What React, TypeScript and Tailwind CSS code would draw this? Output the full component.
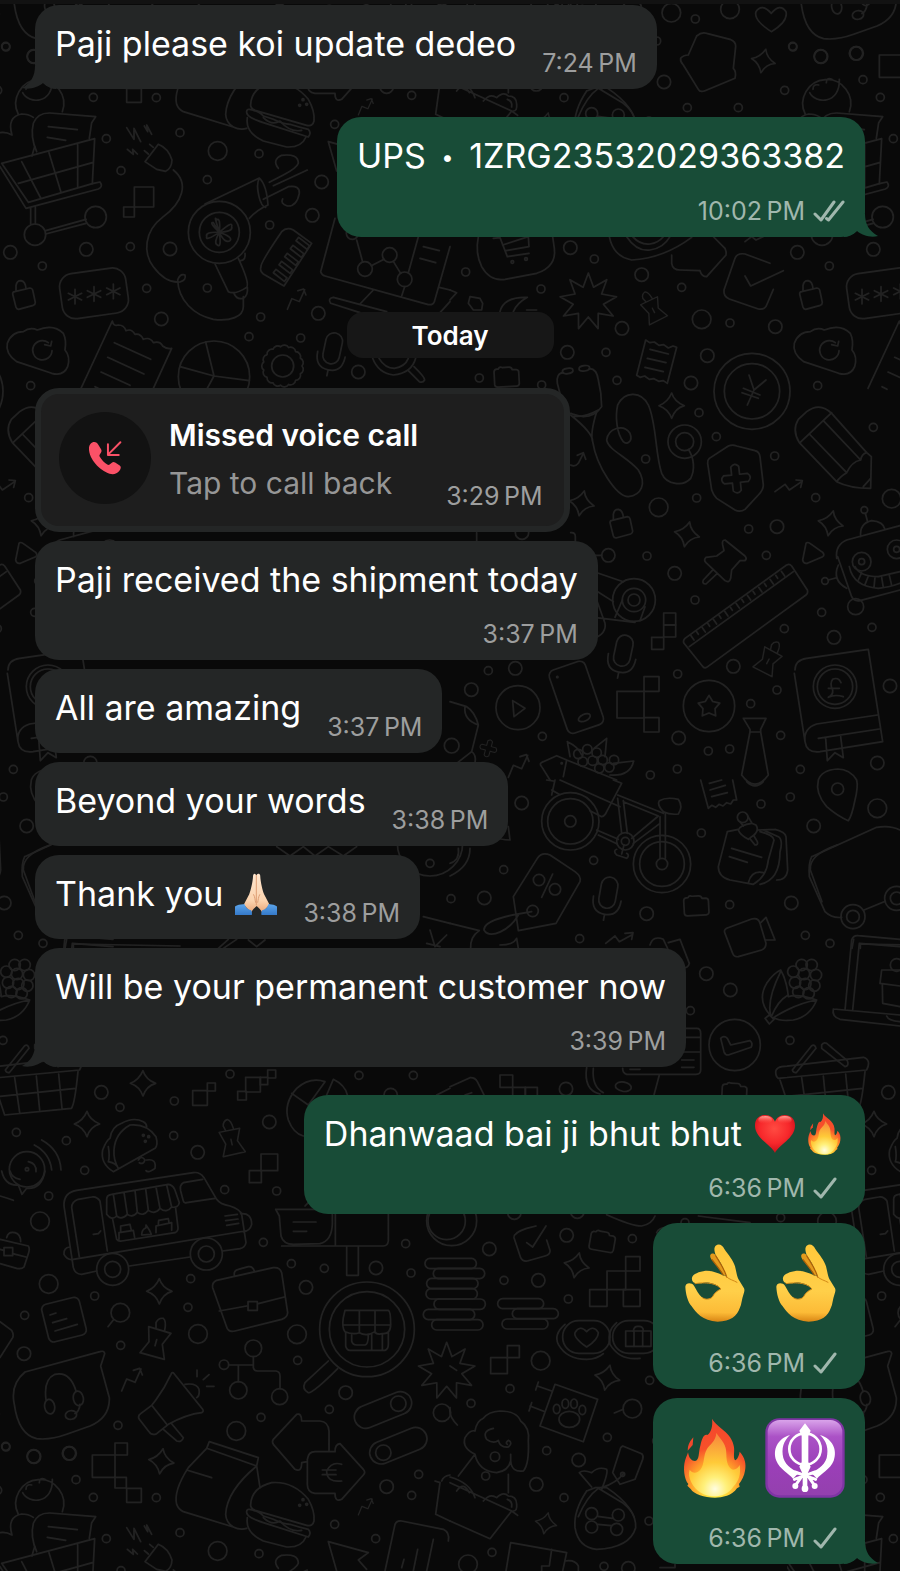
import type { ReactNode } from 'react'

type Dot = [number, number]
type Ring = [number, number, number]
type Box = [number, number, number, number]

interface Patch {
  x: number
  y: number
  small: Dot[]
  medium: Dot[]
  rings: Ring[]
  boxes: Box[]
  lines: string[]
  extra?: ReactNode
}

// little doodles which come back several times in the wallpaper
const SPARKLE = 'M0 -38Q8 -12 38 0Q10 8 0 38Q-10 10 -38 0Q-12 -10 0 -38Z'
const CLIP = 'M-22 -43L45 -23L19 10L25 55L-48 35L-21 2ZM0 -38V-55Q7 -70 22 -68Q32 -60 26 -32M2 -4L-3 14'
const TREND = 'M0 68L15 32L40 42L58 2M35 6L54 0L62 20'
const LOCK = 'M0 40Q0 34 6 33L52 22Q58 22 60 28L68 65Q68 72 62 74L18 86Q12 86 10 80ZM10 32V15Q12 0 25 0Q38 2 40 24'
const MIC = 'M-25 -22V22A25 25 0 0 0 25 22V-22A25 25 0 0 0 -25 -22ZM-42 18Q-42 66 0 66Q42 66 42 18M0 66V84'
const FOLDER = 'M-37 20V-18Q-36 -26 -28 -26H-24Q-20 -34 -12 -30H8Q16 -30 18 -22H30Q38 -20 37 -12V20Q36 28 28 28H-28Q-36 28 -37 20Z'
const CROSS = 'M-12 -36Q0 -50 12 -36V-12H36Q50 0 36 12H12V36Q0 50 -12 36V12H-36Q-50 0 -36 -12H-12Z'

function Doodle({ d, x, y, r = 0, s = 1 }: { d: string; x: number; y: number; r?: number; s?: number }) {
  return <path d={d} transform={`translate(${x} ${y}) rotate(${r}) scale(${s})`} />
}

function starPath(cx: number, cy: number, outer: number, inner: number, n: number) {
  const pts: string[] = []
  for (let i = 0; i < n * 2; i++) {
    const a = (Math.PI * i) / n - Math.PI / 2
    const r = i % 2 ? inner : outer
    pts.push(`${(cx + r * Math.cos(a)).toFixed(1)} ${(cy + r * Math.sin(a)).toFixed(1)}`)
  }
  return `M${pts.join('L')}Z`
}

function gearPath(cx: number, cy: number, r: number, n: number) {
  const at = (i: number) => {
    const a = (Math.PI * 2 * i) / n
    return `${(cx + r * Math.cos(a)).toFixed(1)} ${(cy + r * Math.sin(a)).toFixed(1)}`
  }
  let d = `M${at(0)}`
  for (let i = 1; i <= n; i++) d += `A15 15 0 0 1 ${at(i)}`
  return d
}

const patches: Patch[] = [
  {
    x: 0,
    y: 0,
    small: [[622, 539], [363, 512], [809, 675], [391, 740], [127, 798], [440, 865], [622, 864], [782, 951], [747, 1010], [902, 1014], [92, 1157]],
    medium: [[965, 546], [937, 646], [31, 757], [259, 748], [510, 747], [484, 957], [955, 940], [1075, 1116]],
    rings: [[105, 704, 32], [287, 651, 32], [658, 697, 93], [658, 697, 60], [642, 1130, 107], [848, 1098, 33], [1057, 700, 18], [1095, 807, 22], [1169, 765, 22], [1214, 838, 22]],
    boxes: [[403, 561, 58, 60], [371, 621, 32, 30]],
    lines: [
      'M5 490L85 607L277 551L284 416L5 490M65 485L122 594M147 458L183 577M233 434V560M55 550L280 487',
      'M0 500L78 625L295 567Q310 560 300 546L277 551M92 625V672M106 622V672M137 692L258 658M137 702L258 670',
      'M110 455Q90 410 100 370Q112 338 150 339L287 350L275 368L268 415M145 380L232 389M142 412L197 421',
      'M0 398Q18 395 36 405Q20 350 65 342Q85 342 100 352M104 440Q98 460 96 468',
      'M380 383L402 418V385L422 425M433 378L443 395L440 375L455 403M382 448L400 463L398 448L412 462',
      'M435 485L475 433Q505 445 516 480Q515 505 497 514L470 508ZM449 433L460 442M433 452L445 462',
      'M520 510C570 550 545 610 490 650C430 695 430 760 460 800C490 840 520 848 540 846Q560 840 555 825Q540 820 533 840C535 900 580 945 640 958C690 965 730 950 730 920V890',
      'M615 612L778 534Q800 555 804 615Q770 630 748 655M778 534C765 560 780 620 797 622',
      'M835 505Q815 480 845 466Q895 460 895 490Q890 505 850 525L808 547M820 557L922 510M790 598L865 560Q900 555 898 580Q890 620 862 618Q840 610 848 597',
      'M645 792L685 875Q705 885 740 862Q750 850 715 775M702 880Q710 900 730 895Q745 885 742 862M735 760Q738 780 722 782',
      'M658 697Q640 640 650 660Q662 650 658 697Q700 660 695 680Q700 695 658 697Q700 712 690 722Q675 732 658 697Q665 745 652 735Q640 730 658 697Q615 725 620 710Q615 695 658 697Q625 665 640 668Z',
      'M783 800Q780 790 845 695Q860 680 880 690L935 730L852 858L790 822Q778 812 783 800Z',
      'M50 1085Q15 1060 22 1030Q35 995 70 995Q90 980 112 990Q160 970 190 1000Q200 1020 195 1050Q212 1070 203 1100Q190 1130 155 1120ZM145 1028A29 29 0 1 0 156 1052M134 1034L152 1038L155 1024',
      'M243 1165L337 963Q340 980 355 975Q372 975 378 992Q395 985 405 1003Q422 1000 430 1018Q450 1010 460 1028Q480 1022 488 1038Q500 1048 515 1045L460 1165M343 1028L452 1078M323 1072L432 1122M303 1116L390 1156M285 1160L300 1168',
      'M642 1128L617 1026M642 1128L540 1100M642 1128L748 1142M642 1128L597 1210',
      gearPath(848, 1098, 58, 15),
      'M1005 655L962 815Q965 825 975 828L1285 914Q1300 915 1303 905L1350 740M1070 720L1088 786M1114 797L1152 778M1180 784L1202 820M1255 710L1225 818M1214 860L1205 888M1270 740L1318 752M1260 775L1307 788M1120 870L1080 912M1000 892Q982 895 992 910L1080 938M1000 892L1160 935M1350 905L1320 938M1318 862L1350 870',
      'M1118 1075Q1135 1120 1180 1125Q1235 1120 1247 1075M1137 1075Q1155 1105 1183 1105Q1215 1100 1225 1075M1225 1112L1258 1145Q1268 1150 1274 1140Q1275 1132 1242 1100',
      'M225 868V912M205 880L245 900M205 900L245 880M282 860V904M262 872L302 892M262 892L302 872M340 852V896M320 864L360 884M320 884L360 864',
    ],
    extra: (
      <>
        <Doodle d={LOCK} x={38} y={842} />
        <Doodle d={TREND} x={862} y={867} s={0.9} />
        <Doodle d={MIC} x={998} y={1045} r={12} s={1} />
        <rect x="182" y="812" width="200" height="136" rx="40" transform="rotate(-8 282 880)" />
        {[0, 1, 2, 3, 4].map(i => (
          <rect key={i} x={828 + i * 17} y={808 - i * 24} width="42" height="13" transform={`rotate(38 ${828 + i * 17} ${808 - i * 24})`} />
        ))}
      </>
    ),
  },
  {
    x: 450,
    y: 0,
    small: [[736, 57], [1028, 139], [1004, 271], [712, 323], [865, 323], [620, 123], [433, 777], [47, 816], [273, 867], [695, 862], [840, 969], [468, 1057], [501, 1141], [88, 1134], [275, 1155]],
    medium: [[1112, 169], [1218, 160], [642, 246], [361, 743], [575, 824], [976, 980], [516, 985], [352, 1057], [772, 1067], [723, 1149]],
    rings: [[664, 38, 28], [840, 28, 28], [755, 958, 28], [187, 786, 4], [228, 777, 4], [906, 1174, 114], [906, 1174, 83]],
    boxes: [],
    lines: [
      'M964 95Q910 60 918 35Q935 8 964 40Q990 8 1008 35Q1015 65 964 95Z',
      'M692 175Q700 165 715 165L740 108Q755 95 770 100L840 118Q858 125 857 140L850 205Q860 215 855 235L765 272Q750 278 745 268L700 195Q690 185 692 175Z',
      'M385 350Q410 290 445 265L520 310Q545 330 552 350',
      'M85 710Q75 760 95 800Q120 845 165 838L260 820Q320 800 313 745L308 710M130 715L150 713L172 770L237 760M158 735L235 710L237 740L168 752',
      'M478 710Q490 770 545 780Q640 775 725 712M530 710Q560 755 600 750Q640 745 660 710M548 710Q570 735 600 732Q625 728 640 710',
      'M665 765V790Q668 810 690 810L750 812Q755 830 770 830L828 765Q830 755 825 745L788 708M885 725L905 710L918 720L950 705',
      'M960 790L885 762Q862 758 855 775L822 870Q820 890 838 897L925 927Q945 930 950 915L970 868M885 828L902 858L1000 812',
      starPath(415, 905, 86, 46, 9),
      'M0 870L20 878L0 900M60 890L90 895L98 910L95 930L70 930L55 910ZM150 935Q160 890 232 892Q200 910 190 935M230 930H260',
      'M587 1020L599 1028L613 1026L627 1036L641 1034L655 1044L669 1038L680 1042L652 1150L640 1142L626 1144L612 1136L598 1138L584 1128L570 1132L560 1126ZM600 1048L655 1062M592 1075L648 1088M585 1102L640 1115',
      'M897 1125L912 1170L948 1140M912 1170L892 1215M880 1165L930 1185M876 1178L925 1195',
      'M340 1118Q318 1120 322 1150L335 1200M418 1106Q440 1105 445 1140Q455 1180 455 1220Q435 1250 400 1250Q370 1245 362 1240',
    ],
    extra: (
      <>
        <Doodle d={SPARKLE} x={940} y={183} r={12} s={0.95} />
        <Doodle d={CLIP} x={608} y={928} r={-42} s={0.8} />
        <Doodle d={FOLDER} x={170} y={1132} r={-3} />
        <ellipse cx="353" cy="1113" rx="16" ry="8" transform="rotate(-8 353 1113)" />
        <ellipse cx="403" cy="1105" rx="16" ry="8" transform="rotate(-8 403 1105)" />
      </>
    ),
  },
  {
    x: 450,
    y: 380,
    small: [[747, 98], [799, 170], [587, 237], [740, 354], [974, 228], [1270, 142], [1097, 353], [896, 447], [949, 526], [591, 528], [735, 660], [1003, 746], [1115, 697], [1266, 742], [683, 882], [902, 971], [981, 930], [115, 872], [277, 1069], [775, 1113], [839, 1107], [992, 1066], [682, 1167], [601, 1185], [1051, 1168]],
    medium: [[981, 440], [674, 580], [475, 526], [196, 865], [64, 929], [850, 859], [1152, 772], [1320, 918], [686, 1074], [1282, 1149], [216, 458]],
    rings: [[626, 382, 28], [1325, 356, 28], [1217, 680, 24], [704, 185, 50], [704, 185, 27], [1243, 390, 10], [1125, 603, 10], [1235, 545, 28], [1235, 545, 9], [1340, 508, 28], [1340, 508, 9], [552, 660, 64], [552, 660, 35], [552, 660, 18], [204, 983, 66], [777, 978, 77], [1155, 920, 65], [1155, 920, 53], [5, 1097, 22], [385, 1122, 14], [412, 1108, 14], [440, 1118, 14], [398, 1145, 14], [428, 1142, 14], [458, 1140, 14], [448, 1165, 14], [478, 1162, 14], [492, 1140, 14], [322, 891, 2], [335, 1150, 2]],
    boxes: [[641, 699, 36, 36], [641, 735, 36, 36], [605, 772, 36, 36], [582, 890, 45, 44], [501, 934, 81, 80], [582, 1013, 45, 43]],
    lines: [
      'M365 108Q400 115 445 90M362 105Q430 160 428 185M440 95Q420 160 428 185C440 260 500 350 535 350C575 345 590 310 565 270C530 230 475 210 470 180C475 145 520 130 540 160C550 185 530 195 520 185C500 160 495 110 503 75C525 30 575 35 595 75C620 130 615 220 635 280C650 315 700 320 722 295C735 270 733 235 715 208',
      'M778 235L835 198Q848 193 860 198L915 212Q928 215 930 230L940 315Q940 330 925 345L885 388Q870 398 855 390L800 355Q790 345 785 330L773 250Q772 240 778 235Z',
      'M1048 188Q1025 150 1045 118L1070 95Q1110 65 1145 100L1250 218M1048 188L1160 305M1050 188L1145 98M1078 162L1190 278M1120 122L1232 240M1160 305Q1200 325 1262 325L1264 230L1250 218Q1235 222 1232 240Q1205 245 1190 278Q1170 290 1160 305M1262 295L1240 320',
      'M975 335L1005 313L1018 330L1055 305M1038 300L1057 302L1052 322M362 255Q375 262 385 250L400 220M382 226L400 218L407 238',
      'M1160 535Q1155 495 1190 480L1350 437M1163 530L1205 650Q1212 665 1230 662L1350 630M1232 470Q1228 430 1265 422Q1300 425 1305 448M1252 422L1246 400M1165 555Q1145 600 1190 625M1135 600L1157 594',
      'M1198 560Q1210 620 1285 625Q1320 622 1350 610M1215 560Q1230 590 1285 590L1350 575M1225 600L1235 578M1245 614L1255 588M1272 622L1275 592M1300 622L1295 592M1325 616L1318 586',
      'M825 480Q815 480 818 495L822 512L800 528L768 532Q760 540 768 548L825 602Q838 610 842 595L845 570L870 542L885 542Q892 535 885 528ZM790 568L760 600Q755 612 768 612L802 580',
      'M1068 490L1058 540Q1060 552 1072 550L1118 530Q1125 525 1118 517L1080 490Q1072 485 1068 490Z',
      'M705 775L1010 555Q1018 550 1025 558L1072 630Q1075 640 1068 645L770 862Q762 866 757 858L702 790Q698 782 705 775ZM718 800L1030 575',
      'M432 575L520 605M435 630L490 665M432 712L555 727M440 660L465 730Q470 760 432 775M517 660L495 712M585 680L570 722M425 526H455M362 458H365Q376 458 376 470V488M80 458V488',
      'M188 962L225 985L192 1010Z',
      starPath(777, 980, 34, 19, 5),
      'M880 1015H948L932 1048V1056H900V1048ZM900 1056L875 1185Q915 1240 955 1185L932 1056',
      'M1035 870Q1035 840 1070 835L1255 808L1298 1085L1110 1115Q1070 1120 1065 1085L1033 880M1065 1085Q1060 1045 1100 1032L1283 1005M1105 1075L1288 1047M1127 1075L1132 1142L1155 1118L1180 1133L1172 1070',
      'M1173 908Q1165 890 1148 898Q1138 912 1148 930Q1150 945 1135 952Q1155 942 1180 950M1135 925H1168',
      'M0 965L50 980Q75 995 85 1035L65 1115M45 980Q40 1020 85 1035M20 1150L65 1115Q80 1125 75 1150',
      'M352 1085L360 1130M352 1085Q385 1100 395 1125M470 1075L432 1105M470 1075L465 1130M551 1143L490 1150M551 1143Q540 1190 480 1185M275 1160Q265 1150 280 1145L320 1127L350 1140L500 1200M350 1140L340 1190M275 1160L300 1200',
    ],
    extra: (
      <>
        <Doodle d={SPARKLE} x={665} y={77} />
        <Doodle d={SPARKLE} x={711} y={463} r={12} />
        <Doodle d={SPARKLE} x={1142} y={430} r={12} />
        <Doodle d={SPARKLE} x={395} y={370} r={12} />
        <Doodle d={CROSS} x={858} y={296} r={-6} />
        <Doodle d={CROSS} x={115} y={1105} r={15} s={0.6} />
        <Doodle d={LOCK} x={480} y={388} />
        <Doodle d={MIC} x={520} y={812} r={12} />
        <Doodle d={CLIP} x={955} y={840} r={12} s={0.85} />
        <Doodle d={TREND} x={175} y={1124} />
        <rect x="322" y="852" width="114" height="200" rx="18" transform="rotate(-19 379 952)" />
        <ellipse cx="403" cy="1013" rx="19" ry="10" transform="rotate(-25 403 1013)" />
        {Array.from({ length: 17 }, (_, i) => (
          <path key={i} d={`M${722 + i * 17} ${766 - i * 12}l${i % 2 ? 6 : 10} ${i % 2 ? 9 : 14}`} />
        ))}
      </>
    ),
  },
  {
    x: 0,
    y: 780,
    small: [[690, 882], [523, 963], [360, 982], [49, 1057], [199, 1082], [521, 1067], [254, 1171], [1077, 886], [1240, 886], [1290, 250]],
    medium: [[304, 937], [808, 1026], [593, 1117], [1172, 945]],
    rings: [[81, 1168, 53], [81, 1168, 5], [430, 1066, 3], [446, 1070, 3], [436, 1084, 3], [1290, 190, 98]],
    boxes: [[578, 932, 44, 44], [622, 909, 24, 24], [737, 892, 44, 44], [781, 892, 22, 22], [803, 870, 24, 24], [713, 934, 26, 26], [783, 1122, 50, 50], [748, 1172, 36, 36]],
    lines: [
      'M975 905Q930 890 890 925Q850 970 865 1020Q880 1060 910 1068M875 940L925 975L975 905M980 945L1000 898Q1035 915 1042 945M1310 945L1350 925',
      'M340 1175L465 1105Q475 1095 468 1070Q440 1030 390 1035Q345 1060 342 1110Q340 1140 355 1165M340 1175Q300 1150 308 1110Q320 1080 330 1075Q335 1040 365 1030Q400 1010 430 1025Q440 1030 440 1040M415 1140Q425 1125 435 1140Q430 1155 418 1148M440 1140Q470 1135 465 1165Q445 1180 438 1172M325 1100Q330 1130 325 1145Q350 1150 355 1165',
      'M103 1095Q150 1120 155 1170M125 1080Q180 1110 183 1170M85 1145Q110 1150 108 1175',
      'M70 270Q65 225 150 195M70 270L105 365M195 505L200 478M220 505V492L540 498M655 505L685 478M670 505L710 478M745 480L770 500L795 480M830 200L870 228L910 200L945 228L985 200L1030 228L1070 200M1270 410L1350 430M1290 450L1305 500L1340 465M1280 490L1320 500',
    ],
    extra: (
      <>
        <Doodle d={SPARKLE} x={429} y={910} />
        <Doodle d={SPARKLE} x={261} y={1032} />
        <Doodle d={CLIP} x={693} y={1082} r={-28} s={0.9} />
      </>
    ),
  },
  {
    x: 450,
    y: 780,
    small: [[754, 159], [933, 72], [1021, 51], [431, 241], [161, 269], [3, 356], [389, 476], [839, 374], [1066, 466], [1140, 490], [721, 692], [1020, 781]],
    medium: [[215, 69], [1091, 138], [103, 354], [590, 401], [1024, 369], [769, 581], [841, 630], [348, 927]],
    rings: [[1282, 85, 28], [361, 124, 86], [361, 124, 68], [361, 124, 17], [636, 252, 86], [636, 252, 67], [636, 252, 17], [526, 184, 26], [526, 184, 12], [267, 300, 17], [315, 328, 17], [248, 393, 17], [1209, 410, 36], [1209, 410, 19], [1340, 355, 36], [1340, 355, 19], [1163, 27, 18], [1340, 555, 19], [854, 795, 77], [1055, 555, 17], [1085, 555, 17], [1030, 575, 17], [1062, 582, 17], [1098, 585, 17], [1035, 608, 17], [1066, 612, 17], [1093, 617, 17], [1045, 636, 17], [1076, 640, 17], [878, 112, 16]],
    boxes: [[150, 885, 38, 37], [188, 922, 38, 37], [226, 922, 36, 37]],
    lines: [
      'M440 150L505 178M445 165L502 192M503 55L515 160M520 62L532 160M503 45L640 100M520 65L625 108L545 175M630 130L550 190M630 110V235M646 100V235M640 95Q620 75 628 62Q650 50 685 58Q700 80 685 102Q660 105 640 95',
      'M522 195L515 222M500 208Q488 212 500 225L530 235Q540 225 530 220M315 0L305 45M330 0L510 80M305 30L330 44M420 92L455 110Q465 108 470 95L515 10L490 0M290 0L310 3',
      'M752 0L775 85L785 76L797 82L807 73L819 78L830 68L842 72L850 60L860 60L848 0M780 30L826 16M785 50L832 38M778 10L815 0M890 5Q915 30 940 5',
      'M832 155L805 260Q805 290 840 300L910 313Q950 290 955 240L972 180Q970 165 930 155M940 150L985 170Q1000 180 990 215Q990 300 930 313M975 148Q1005 155 1008 170L1013 270Q1010 300 980 300M845 205L935 232M838 230L892 247M895 308Q905 270 940 278M832 155L865 148M865 150Q870 165 895 178L905 170Q930 155 918 135L905 130Q870 135 865 150M870 125L880 138M893 108L905 128M900 176L915 195Q925 195 922 185L912 168M925 150L975 148',
      'M205 452L190 350L262 235Q275 215 300 225L375 275Q395 290 390 305L318 430ZM308 282L275 352M245 395C180 405 100 420 102 450C120 480 180 450 205 405',
      'M825 460Q820 450 830 445L905 417Q925 412 930 430L948 490Q948 505 935 510L865 530Q852 532 848 520ZM930 430L948 412L975 480L945 480',
      'M467 490L495 468L508 485L545 465M525 460L549 458L545 478',
      'M600 495Q610 465 640 478L655 510M655 488L690 478L718 550Q715 565 695 565',
      'M1085 230Q1075 250 1078 290L1125 395Q1145 415 1175 412M1085 230L1280 142Q1320 135 1350 150M1242 390L1306 364',
      'M1105 0Q1095 40 1130 80Q1165 110 1195 122Q1205 110 1215 60Q1225 20 1220 0Q1200 -33 1163 -33Q1115 -30 1105 0',
      'M960 705Q920 660 950 610Q970 580 992 570Q1010 600 1015 650Q1040 640 1100 660Q1080 710 1030 720Q990 725 970 712M992 575Q950 660 962 705M1015 645Q985 660 965 708M1100 660Q1040 670 975 710M945 715L958 705L972 718L958 732Z',
      'M1185 690L1205 480Q1210 465 1225 467L1350 478M1208 690L1228 490L1350 500M1150 687Q1145 710 1170 718L1350 738M1150 687L1350 705M1350 570H1295L1290 610L1350 618M1297 615L1298 670L1350 680M1310 708Q1315 722 1350 725',
      'M812 775Q822 765 832 775L842 795L900 782Q910 790 903 802L835 825Q825 825 822 815Z',
      'M980 890Q970 865 995 860L1240 832Q1265 840 1250 870L985 895ZM990 900L1025 1005L1225 985Q1235 975 1245 875M1055 893L1070 998M1120 888L1130 990M1187 882L1197 985M1003 950L1238 925',
      'M1085 797Q1095 792 1098 805L1040 877Q1030 880 1027 870ZM1115 795Q1120 785 1130 790L1192 842Q1198 858 1185 860L1115 805Z',
      'M698 745H740Q752 745 752 760V870Q752 883 738 883H530Q518 880 518 865M698 772H750M698 816H750M695 840H732M695 862H732M410 862Q400 930 450 942M430 865Q425 920 460 938M628 885L612 945M540 868H570',
      'M0 430L88 452Q60 470 62 505M150 495Q190 495 200 475L205 505M0 920L60 893Q75 892 82 905L102 945M45 945L65 938',
      'M135 170Q150 180 180 180L175 140M60 205Q60 260 0 288M25 205Q30 240 0 250',
    ],
    extra: (
      <>
        <Doodle d={MIC} x={475} y={338} r={10} />
        <Doodle d={FOLDER} x={739} y={378} r={-3} />
        <Doodle d={FOLDER} x={853} y={940} r={3} />
        <ellipse cx="520" cy="920" rx="24" ry="14" transform="rotate(10 520 920)" />
      </>
    ),
  },
  {
    x: 0,
    y: 1171,
    small: [[146, 75], [674, 56], [830, 60], [790, 214], [874, 278], [973, 292], [1233, 306], [1217, 218], [284, 375], [572, 323], [564, 409], [74, 433], [362, 523], [893, 568], [988, 715], [354, 763], [783, 739], [18, 828], [228, 926], [280, 979], [469, 980], [540, 1085], [319, 1103], [777, 1148], [1004, 1060], [1127, 1103], [1256, 910], [1235, 973]],
    medium: [[1128, 291], [918, 349], [72, 548], [1037, 665], [102, 857], [209, 847], [1160, 947]],
    rings: [[120, 151, 28], [146, 339, 28], [594, 489, 28], [891, 490, 28], [709, 780, 28], [653, 1140, 28], [361, 425, 28], [1326, 725, 26], [338, 295, 48], [338, 295, 24], [619, 249, 48], [619, 249, 24], [760, 532, 25], [672, 581, 14], [715, 658, 26], [839, 677, 24], [1101, 475, 142], [1101, 475, 113], [1195, 698, 23], [1150, 845, 23], [909, 986, 3], [899, 1003, 3], [920, 1000, 3]],
    boxes: [[12, 230, 26, 24], [744, 392, 28, 26], [345, 816, 37, 36], [277, 852, 68, 67], [345, 919, 34, 32], [380, 952, 44, 42]],
    lines: [
      'M290 300L245 310Q225 310 220 290L192 105Q190 65 230 58L580 5Q600 2 612 20L650 85Q660 100 690 105Q720 115 725 130L738 215Q735 230 720 233L668 240M570 258L388 285M220 265L735 180',
      'M322 240L300 90Q290 75 275 78L235 85Q215 92 215 110L238 258M608 25L550 35Q538 42 542 60L550 90Q552 97 560 95L645 82M280 190L295 188L302 180M675 135L712 130M677 149L714 144M680 163L716 157M722 128Q755 125 755 160Q750 180 730 182M210 228Q190 230 192 250Q200 265 215 266',
      'M320 85Q320 72 335 70L505 40Q518 42 524 55L538 95Q535 112 515 108Q500 128 480 112Q465 132 445 118Q430 138 412 124Q398 142 382 130Q365 148 350 135Q335 150 320 130ZM340 70L350 135M372 64L382 130M405 58L412 124M437 53L445 118M468 48L480 112M500 42L515 108',
      'M338 145L350 205Q355 212 365 210L525 185Q535 180 534 170L527 112M357 205V185L400 178L404 200M362 182V165L390 160L394 178M425 192Q425 175 438 170V162Q450 178 454 190ZM468 185V165L515 155V178M475 160L476 148L505 143L507 155',
      'M0 205L85 225Q90 232 86 245L72 288Q65 295 50 292L0 278M20 200Q25 180 45 185Q62 190 62 212M0 235L12 238M38 248L78 258M0 452L35 478Q42 490 38 500L0 560',
      'M5 0Q15 45 55 42L66 70L80 52Q125 55 135 0M30 0Q35 20 60 25M0 75Q20 80 40 88',
      'M150 432L168 426M158 455L200 443M165 480L232 460M340 447L324 467',
      'M75 603Q30 640 43 700Q55 790 110 803Q150 808 200 790L270 765Q330 740 328 680L302 585L314 548Q313 538 300 542ZM138 685Q130 625 165 610Q210 600 228 660M240 700Q238 720 225 728',
      'M520 605L608 715Q612 722 605 725Q560 730 505 760L470 788Q455 795 447 782L418 745Q412 735 422 728L455 703Q490 660 513 610Q516 603 520 605ZM455 703L502 762M490 775L530 810Q545 815 550 800L515 758M555 640Q590 635 597 655Q600 675 590 680M591 597V617M610 626L627 611M620 646H642',
      'M650 328L820 290Q840 288 845 305L863 425Q862 440 845 445L705 480Q685 485 680 468L638 350Q635 335 650 328ZM658 420L740 405M775 398L853 378M703 315Q700 298 715 295L745 287Q758 285 763 300',
      'M686 582H758M760 557V590Q762 600 772 600H828Q840 602 840 615V653M715 583V632',
      'M985 570L915 635Q905 655 925 665Q938 668 1013 593',
      'M1035 418H1165Q1172 420 1172 460Q1172 490 1148 488Q1128 492 1125 482Q1100 498 1078 485Q1060 492 1035 482Q1025 470 1030 440ZM1030 462H1172M1078 418V485M1125 418V485M1037 485V525Q1040 538 1050 538H1155Q1165 535 1165 520V485M1115 490V538M1147 490V538M1055 492V510Q1058 522 1070 522H1095Q1105 520 1105 492',
      'M905 750Q905 725 890 730L820 805Q815 812 820 820L885 895Q905 905 905 875L922 872M905 750H960Q985 752 987 780V838M945 842H1005Q1005 820 1020 818L1090 895Q1098 905 1090 912L1025 985Q1005 995 1005 967H945Q922 965 922 940V865Q925 842 945 842ZM1025 880Q995 870 980 900Q980 935 1025 930M967 897H1008M967 911H1008',
      'M620 832L628 812L775 860L770 885L620 832L565 890Q520 960 530 1000Q535 1015 550 1022L700 1068Q720 1078 740 1072M770 885L780 950M770 885Q680 960 677 1030Q678 1055 700 1068M560 897L635 920',
      'M752 1000Q755 950 815 935Q880 930 925 985Q945 1020 942 1050Q938 1068 920 1063L765 1018Q750 1010 752 1000ZM740 1025Q738 1010 760 1018Q780 1022 790 1035L820 1045Q850 1060 870 1060Q900 1070 925 1075Q935 1085 925 1098L790 1055Q742 1040 740 1025ZM742 1040Q735 1085 790 1110L860 1128Q905 1130 918 1098',
      'M790 1040Q815 1065 840 1050Q870 1085 905 1078',
      'M1155 1200L1185 1060Q1190 1048 1205 1050L1330 1075Q1350 1085 1345 1110M1212 1165L1205 1190M1253 1135L1240 1200M1300 1105L1280 1200M985 1112L1105 1145L1075 1167L1100 1195M985 1112L1010 1200M1305 930L1320 935L1307 1030L1350 1050M1325 930Q1330 915 1350 912',
      'M827 115H1165V210Q1163 225 1150 225H845M827 115L838 135L843 195Q850 220 880 220L960 218Q995 210 997 160V130M1006 130V225M880 153H948M880 181H920M1040 225V313H1075V225M915 105L925 95',
      'M55 1030A72 72 0 1 1 187 1022M68 965C85 1000 160 1000 157 925M78 955Q78 938 95 942M118 935Q118 918 135 925',
    ],
    extra: (
      <>
        <Doodle d={SPARKLE} x={478} y={361} />
        <Doodle d={SPARKLE} x={484} y={871} r={8} />
        <Doodle d={CLIP} x={468} y={510} />
        <Doodle d={TREND} x={365} y={592} />
        <Doodle d={TREND} x={1075} y={983} s={0.72} />
        <rect x="134" y="388" width="116" height="116" rx="16" transform="rotate(-14 192 446)" />
        <rect x="1059" y="683" width="180" height="68" rx="34" transform="rotate(-22 1149 717)" />
        <rect x="1105" y="790" width="180" height="68" rx="34" transform="rotate(-22 1195 824)" />
        <ellipse cx="149" cy="707" rx="15" ry="22" transform="rotate(-10 149 707)" />
        <ellipse cx="235" cy="682" rx="15" ry="22" transform="rotate(-10 235 682)" />
        <ellipse cx="213" cy="732" rx="17" ry="13" transform="rotate(-10 213 732)" />
      </>
    ),
  },
  {
    x: 450,
    y: 1171,
    small: [[162, 328], [355, 384], [547, 203], [180, 653], [63, 697], [599, 628], [472, 799], [290, 839], [342, 980], [107, 915], [126, 1144], [462, 1186], [597, 1050], [705, 155], [992, 140]],
    medium: [[118, 234], [350, 193], [265, 328], [386, 867], [259, 940], [193, 125], [535, 1192], [382, 122]],
    rings: [[272, 569, 28], [547, 713, 28], [54, 1180, 28], [5, 149, 75], [-10, 150, 56], [135, 857, 14], [425, 1028, 18], [425, 1068, 18], [500, 1075, 18], [505, 1032, 18], [518, 910, 6]],
    boxes: [[527, 257, 43, 43], [471, 300, 56, 56], [419, 356, 52, 50], [520, 356, 50, 50], [122, 560, 50, 48], [172, 524, 36, 36], [527, 480, 76, 46]],
    lines: [
      'M230 172Q190 185 192 200L212 260Q218 272 232 270L285 255Q302 250 300 238L290 207M230 215L248 228L288 165M230 172L258 165',
      'M345 460Q310 490 325 520Q350 565 410 565Q440 565 460 548M500 455Q470 480 480 520Q510 570 570 562M410 528Q370 500 375 485Q390 460 410 482Q430 460 445 485Q445 505 410 528Z',
      'M552 480V526M578 480V526M550 480Q552 465 565 466Q580 465 580 480',
      starPath(-10, 600, 86, 46, 9),
      'M75 850Q35 830 45 800Q60 775 75 780Q80 750 100 742Q115 722 150 720Q200 720 212 750Q240 770 235 810Q238 880 220 900Q185 905 182 870V850M75 850Q85 900 140 905Q175 900 182 870M75 850L25 915M175 910V965M130 772Q95 780 110 805Q130 820 145 808Q150 830 175 828Q190 815 175 808Q165 815 172 820',
      'M315 640L443 685L400 812L270 765ZM305 660L262 645M265 633L257 657M285 722L240 705M245 695L237 720M520 715L493 726',
      'M518 825L575 848Q582 855 578 865L555 925L510 940L488 905L512 830ZM455 950Q500 935 520 908',
      'M410 960Q370 1020 375 1070Q385 1130 440 1135Q540 1130 557 1070Q560 1010 470 950M410 960L435 950L470 950M425 948L388 905Q400 895 425 905Q445 885 470 895Q475 905 455 955M443 1036L487 1042M443 1060L484 1064',
      'M0 935L185 1020L120 1103L0 1050M185 1020L203 1033M0 918Q60 935 75 980M100 990Q120 965 140 980Q160 960 175 975Q200 975 200 1000Q202 1020 190 1020M172 985Q188 990 185 1008M20 960Q40 930 58 965',
      'M168 1200L182 1115L350 1145L338 1200M305 1135L298 1185H275V1200M345 1170Q375 1165 385 1185V1200M630 1190H675V1180',
      'M470 131Q545 165 575 165Q605 160 615 135M745 135L900 155M620 185Q625 170 650 170M0 710Q-5 735 22 762M0 585L20 598',
    ],
    extra: (
      <>
        <Doodle d={SPARKLE} x={380} y={283} r={12} />
        <Doodle d={SPARKLE} x={472} y={620} r={12} />
        <Doodle d={SPARKLE} x={288} y={1057} r={12} s={0.85} />
        <Doodle d={FOLDER} x={457} y={212} r={10} />
        {[[-75, 262], [-50, 292], [-70, 322], [-72, 353], [-48, 384], [-80, 415], [-55, 446]].map(([x, y]) => (
          <rect key={y} x={x} y={y} width="154" height="31" rx="15" />
        ))}
        {[[143, 383], [187, 413], [156, 444]].map(([x, y]) => (
          <rect key={y} x={x} y={y} width="138" height="30" rx="15" />
        ))}
        <rect x="338" y="449" width="142" height="98" rx="48" />
        <rect x="488" y="449" width="142" height="98" rx="48" />
        <ellipse cx="358" cy="745" rx="31" ry="24" />
        {[[320, 714], [346, 698], [372, 698], [397, 717]].map(([x, y]) => (
          <ellipse key={x} cx={x} cy={y} rx="10" ry="14" />
        ))}
      </>
    ),
  },
]

function Wallpaper() {
  return (
    <svg className="absolute inset-0 w-full h-full" aria-hidden="true">
      <defs>
        <g id="doodles" fill="none" stroke="#222222" strokeWidth="5" strokeLinecap="round" strokeLinejoin="round">
          {patches.map(p => (
            <g key={`${p.x}-${p.y}`} transform={`translate(${p.x} ${p.y}) scale(0.33333)`}>
              {p.small.map(([x, y]) => <circle key={`${x}-${y}`} cx={x} cy={y} r="12" />)}
              {p.medium.map(([x, y]) => <circle key={`${x}-${y}`} cx={x} cy={y} r="20" />)}
              {p.rings.map(([x, y, r]) => <circle key={`${x}-${y}-${r}`} cx={x} cy={y} r={r} />)}
              {p.boxes.map(([x, y, w, h]) => <rect key={`${x}-${y}`} x={x} y={y} width={w} height={h} />)}
              {p.lines.map(d => <path key={d} d={d} />)}
              {p.extra}
            </g>
          ))}
        </g>
        <pattern id="wallpaper" width="787" height="1400" patternUnits="userSpaceOnUse">
          <use href="#doodles" />
          <use href="#doodles" x="-787" />
          <use href="#doodles" y="-1400" />
          <use href="#doodles" x="-787" y="-1400" />
        </pattern>
      </defs>
      <rect width="100%" height="100%" fill="url(#wallpaper)" />
    </svg>
  )
}

function Tail({ side }: { side: 'in' | 'out' }) {
  return (
    <svg
      viewBox="0 0 34 23"
      className={side === 'in' ? 'absolute bottom-0 -left-[13px] w-[34px] h-[23px] text-[#242626]' : 'absolute bottom-0 -right-[13px] w-[34px] h-[23px] -scale-x-100 text-[#184c37]'}
      aria-hidden="true"
    >
      <path fill="currentColor" d="M13 0C13 10 9 17 0 22C8 24 16 21 21 17C25 21 30 23 34 23V0Z" />
    </svg>
  )
}

function Check() {
  return (
    <svg viewBox="0 0 24 22" className="w-6 h-[22px] mr-2" role="img" aria-label="Sent" fill="none" stroke="currentColor" strokeLinecap="round" strokeLinejoin="round">
      <path d="M2 14L8 20L22 2" strokeWidth="3" />
    </svg>
  )
}

function DoubleCheck() {
  return (
    <svg viewBox="0 0 32 22" className="w-8 h-[22px]" role="img" aria-label="Delivered" fill="none" stroke="currentColor" strokeWidth="3" strokeLinecap="round" strokeLinejoin="round">
      <path d="M2 14L8 20L21 2M13.5 18.5L15.5 20L30 2" />
    </svg>
  )
}

function Fire({ className }: { className: string }) {
  return (
    <svg viewBox="105 597 240 240" className={className} role="img" aria-label="Fire">
      <defs>
        <radialGradient id="flame" gradientUnits="userSpaceOnUse" cx="228" cy="800" r="185">
          <stop offset="0" stopColor="#fffbd0" />
          <stop offset="0.18" stopColor="#ffe93f" />
          <stop offset="0.38" stopColor="#ffa32b" />
          <stop offset="0.62" stopColor="#f7512a" />
          <stop offset="1" stopColor="#f4482c" />
        </radialGradient>
        <radialGradient id="core" gradientUnits="userSpaceOnUse" cx="228" cy="810" r="160">
          <stop offset="0" stopColor="#fffde2" />
          <stop offset="0.22" stopColor="#fff07a" />
          <stop offset="0.5" stopColor="#ffca38" />
          <stop offset="1" stopColor="#f78a3c" />
        </radialGradient>
      </defs>
      <path fill="url(#flame)" d="M219 599C232 625 280 640 285 685C287 700 282 715 288 724C295 722 300 710 302 698C318 715 322 735 318 755C316 770 308 785 300 795L302 803L294 808C280 830 250 836 228 836C195 836 165 826 155 810L145 800L148 795C135 780 132 745 138 725C142 712 146 706 147 700C150 718 158 726 168 726C182 724 178 700 184 680C190 655 195 645 205 648C216 640 222 622 219 599Z" />
      <path fill="url(#core)" d="M232 642C250 668 262 675 262 705C262 730 268 748 282 752C292 752 298 745 302 738C306 765 300 785 284 802C268 826 246 832 228 832C198 832 170 818 156 788C150 775 148 762 152 752C160 764 174 764 184 752C198 735 192 708 204 690C212 676 230 668 232 642Z" />
      <path fill="#f4482c" d="M163 655L161 678L146 695Q145 675 163 655Z" />
    </svg>
  )
}

function Heart() {
  return (
    <svg viewBox="0 0 128 128" className="size-[42px]" role="img" aria-label="Red heart">
      <defs>
        <radialGradient id="heart" gradientUnits="userSpaceOnUse" cx="62" cy="48" r="74">
          <stop offset="0" stopColor="#ff4b42" />
          <stop offset="0.6" stopColor="#f7282b" />
          <stop offset="1" stopColor="#c90f1b" />
        </radialGradient>
        <linearGradient id="gloss" x1="0" y1="0" x2="0" y2="1">
          <stop offset="0" stopColor="#ffb3a8" stopOpacity="0.9" />
          <stop offset="1" stopColor="#ff4b42" stopOpacity="0" />
        </linearGradient>
      </defs>
      <path fill="url(#heart)" d="M64 122C54 98 3 78 3 38C3 16 18 6 34 6C49 6 60 15 64 27C68 15 79 6 94 6C110 6 125 16 125 38C125 78 74 98 64 122Z" />
      <ellipse cx="34" cy="21" rx="21" ry="12" fill="url(#gloss)" />
      <ellipse cx="94" cy="21" rx="21" ry="12" fill="url(#gloss)" />
    </svg>
  )
}

function FoldedHands() {
  return (
    <svg viewBox="0 0 130 130" className="size-[42px]" role="img" aria-label="Folded hands">
      <defs>
        <linearGradient id="sleeve" x1="0" y1="0" x2="0" y2="1">
          <stop offset="0" stopColor="#5ba4ea" />
          <stop offset="1" stopColor="#3579c9" />
        </linearGradient>
        <linearGradient id="palm" x1="0" y1="0" x2="0" y2="1">
          <stop offset="0" stopColor="#ffe6ce" />
          <stop offset="0.7" stopColor="#fbd3ae" />
          <stop offset="1" stopColor="#e9a678" />
        </linearGradient>
      </defs>
      <path fill="url(#palm)" d="M65 6C62 0 57 2 56 8C55 30 48 56 44 66L27 98L50 122C54 112 64 106 67 102C70 106 80 112 84 122L107 98L90 66C86 56 79 30 78 8C77 1 70 0 67 6Z" />
      <path fill="none" stroke="#dd9c73" strokeWidth="3" d="M66 6V100M57 66C62 74 62 84 64 92M77 66C72 74 72 84 70 92" />
      <path fill="url(#sleeve)" d="M0 104C8 98 20 96 30 97C32 108 40 114 50 115C53 120 53 126 52 130H0ZM130 104C122 98 112 96 103 97C101 108 94 114 84 115C81 120 81 126 82 130H130Z" />
    </svg>
  )
}

function OkHand() {
  return (
    <svg viewBox="105 72 240 240" className="size-20" role="img" aria-label="OK hand">
      <defs>
        <linearGradient id="skin" gradientUnits="userSpaceOnUse" x1="230" y1="76" x2="225" y2="308">
          <stop offset="0" stopColor="#ffc83a" />
          <stop offset="0.6" stopColor="#ffcf49" />
          <stop offset="0.88" stopColor="#fcbb37" />
          <stop offset="1" stopColor="#d98514" />
        </linearGradient>
      </defs>
      <path fill="#e39a1d" d="M256 172C248 155 232 142 226 132C216 122 212 114 214 108C218 101 226 103 230 108L262 160Z" />
      <path fill="url(#skin)" d="M139 203C140 190 158 190 165 200C172 212 178 226 190 236C200 243 214 240 220 234C226 222 236 214 246 210C240 202 232 196 218 193C205 188 195 193 180 193C165 195 157 188 159 176C162 164 180 158 200 155C222 154 242 164 260 172C258 152 246 132 230 108C226 98 224 86 230 80C240 73 250 78 256 90C268 108 282 122 288 142C292 158 294 172 298 180L315 208Q318 214 314 224C308 240 308 256 302 268C294 290 276 308 236 308C190 306 170 280 158 262C146 248 140 225 139 203Z" />
      <path fill="none" stroke="#a95d08" strokeWidth="3.5" strokeLinecap="round" d="M230 110C240 128 256 148 263 174M219 122C230 136 244 152 252 168" />
      <path fill="none" stroke="#d38a17" strokeWidth="3" strokeLinecap="round" d="M263 174C272 182 284 184 294 190M168 194C190 190 206 192 218 194C232 197 240 203 246 210C236 214 226 222 220 234C212 242 200 243 190 236" />
    </svg>
  )
}

function Khanda() {
  return (
    <svg viewBox="0 0 240 240" className="size-20" role="img" aria-label="Khanda">
      <defs>
        <linearGradient id="tile" x1="0" y1="0" x2="0" y2="1">
          <stop offset="0" stopColor="#d9a3ea" />
          <stop offset="0.22" stopColor="#ab52c6" />
          <stop offset="0.6" stopColor="#9b3fb8" />
          <stop offset="1" stopColor="#9440ae" />
        </linearGradient>
      </defs>
      <rect x="1" y="1" width="238" height="238" rx="42" fill="#7f34a4" />
      <rect x="8" y="6" width="224" height="226" rx="36" fill="url(#tile)" />
      <g fill="#fff">
        <path d="M120 16L137 38L130 54V132L137 146L128 166H112L103 146L110 132V54L103 38Z" />
        <path d="M75 51C37 62 22 96 34 128C44 154 72 166 84 182L94 172L106 164C88 160 62 144 55 120C48 92 56 68 75 51Z" />
        <path d="M165 51C203 62 218 96 206 128C196 154 168 166 156 182L146 172L134 164C152 160 178 144 185 120C192 92 184 68 165 51Z" />
        <rect x="113" y="160" width="14" height="48" />
        <circle cx="120" cy="212" r="10" />
        <circle cx="91" cy="204" r="9" />
        <circle cx="149" cy="204" r="9" />
      </g>
      <circle cx="120" cy="93" r="47" fill="none" stroke="#fff" strokeWidth="8" />
      <path fill="none" stroke="#fff" strokeWidth="9" strokeLinecap="round" d="M88 184L150 162M152 184L90 162M93 200L114 170M147 200L126 170" />
    </svg>
  )
}

function MissedCallIcon() {
  return (
    <svg viewBox="258 182 110 110" className="size-9" aria-hidden="true">
      <path fill="#fb5167" d="M264 208C264 196 272 188 280 188C286 188 290 192 293 197L301 210C304 215 302 219 299 223C296 227 295 229 297 233C303 243 311 251 320 257C324 260 327 258 331 254C335 249 339 248 344 251L358 260C363 264 362 270 357 276C350 286 338 288 327 285C296 275 264 240 264 208Z" />
      <path fill="none" stroke="#fb5167" strokeWidth="6" strokeLinecap="round" strokeLinejoin="round" d="M360 189L323 226M322 195V228H355" />
    </svg>
  )
}

interface BubbleProps {
  side: 'in' | 'out'
  time: string
  children: ReactNode
  tail?: boolean
  inline?: boolean
  status?: ReactNode
}

function Bubble({ side, time, children, tail, inline, status }: BubbleProps) {
  const tone = side === 'in' ? 'self-start bg-[#242626]' : 'self-end bg-[#184c37]'
  const flow = inline ? 'flex-row items-end gap-[26px]' : 'flex-col gap-[21px]'
  return (
    <li className={`relative flex ${flow} ${tone} max-w-full rounded-[24px] pt-[18px] px-5 pb-[14px]`}>
      {tail && <Tail side={side} />}
      <div className={`flex items-center text-[34px] leading-[42px] text-white ${inline ? 'mb-[10px]' : ''}`}>{children}</div>
      <div className={`flex items-center justify-end gap-2 text-[25px] leading-6 whitespace-nowrap ${side === 'in' ? 'text-[#9d9e9e]' : 'text-[#a0b7ad]'}`}>
        <time>{time}</time>
        {status}
      </div>
    </li>
  )
}

function EmojiBubble({ time, tail, children }: { time: string; tail?: boolean; children: ReactNode }) {
  return (
    <li className="relative self-end flex flex-col gap-7 rounded-[24px] bg-[#184c37] pt-5 pb-[14px] pl-[21px] pr-5">
      {tail && <Tail side="out" />}
      <div className="flex gap-[11px]">{children}</div>
      <div className="flex items-center justify-end gap-2 text-[25px] leading-6 text-[#a0b7ad]">
        <time>{time}</time>
        <Check />
      </div>
    </li>
  )
}

export default function App() {
  return (
    <main className="relative min-h-screen overflow-hidden bg-[#090909] font-['Inter','Liberation_Sans',sans-serif]">
      <Wallpaper />
      <div className="relative h-1 bg-[#121212]" />
      <ol className="relative flex flex-col px-[35px] pt-px pb-[6px]">
        <Bubble side="in" time={'7:24\u202fPM'} tail inline>Paji please koi update dedeo</Bubble>
        <li className="h-7" aria-hidden="true" />
        <Bubble side="out" time={'10:02\u202fPM'} tail status={<DoubleCheck />}>
          <span>UPS <span className="text-[22px] mx-[6px] align-[3px]">•</span> 1ZRG23532029363382</span>
        </Bubble>

        <li className="self-center mt-[75px] mb-[30px] w-[207px] h-[46px] rounded-[16px] bg-[#171717] text-center text-[26px] leading-[48px] font-semibold text-white">
          Today
        </li>

        <li className="self-start">
          <button type="button" className="flex rounded-[24px] border-[6px] border-[#242626] bg-[#1e1e1e] pl-[18px] pr-[21px] h-36 text-left">
            <span className="flex items-center justify-center size-[92px] rounded-full bg-[#121212] mt-[18px]">
              <MissedCallIcon />
            </span>
            <span className="flex flex-col ml-[18px] mt-[17px] text-[30px]">
              <span className="font-semibold leading-[48px] text-white">Missed voice call</span>
              <span className="leading-[48px] text-[#969696]">Tap to call back</span>
            </span>
            <time className="self-end mb-[18px] ml-7 text-[25px] leading-6 text-[#9d9e9e]">{'3:29\u202fPM'}</time>
          </button>
        </li>
        <li className="h-[9px]" aria-hidden="true" />

        <Bubble side="in" time={'3:37\u202fPM'}>Paji received the shipment today</Bubble>
        <li className="h-[9px]" aria-hidden="true" />
        <Bubble side="in" time={'3:37\u202fPM'} inline>All are amazing</Bubble>
        <li className="h-[9px]" aria-hidden="true" />
        <Bubble side="in" time={'3:38\u202fPM'} inline>Beyond your words</Bubble>
        <li className="h-[9px]" aria-hidden="true" />
        <Bubble side="in" time={'3:38\u202fPM'} inline>
          <span className="mr-3">Thank you</span>
          <FoldedHands />
        </Bubble>
        <li className="h-[9px]" aria-hidden="true" />
        <Bubble side="in" time={'3:39\u202fPM'} tail>Will be your permanent customer now</Bubble>
        <li className="h-7" aria-hidden="true" />

        <Bubble side="out" time={'6:36\u202fPM'} status={<Check />}>
          <span className="mr-3">Dhanwaad bai ji bhut bhut</span>
          <Heart />
          <Fire className="size-[42px] ml-[7px]" />
        </Bubble>
        <li className="h-[9px]" aria-hidden="true" />
        <EmojiBubble time={'6:36\u202fPM'}>
          <OkHand />
          <OkHand />
        </EmojiBubble>
        <li className="h-[9px]" aria-hidden="true" />
        <EmojiBubble time={'6:36\u202fPM'} tail>
          <Fire className="size-20" />
          <Khanda />
        </EmojiBubble>
      </ol>
    </main>
  )
}
